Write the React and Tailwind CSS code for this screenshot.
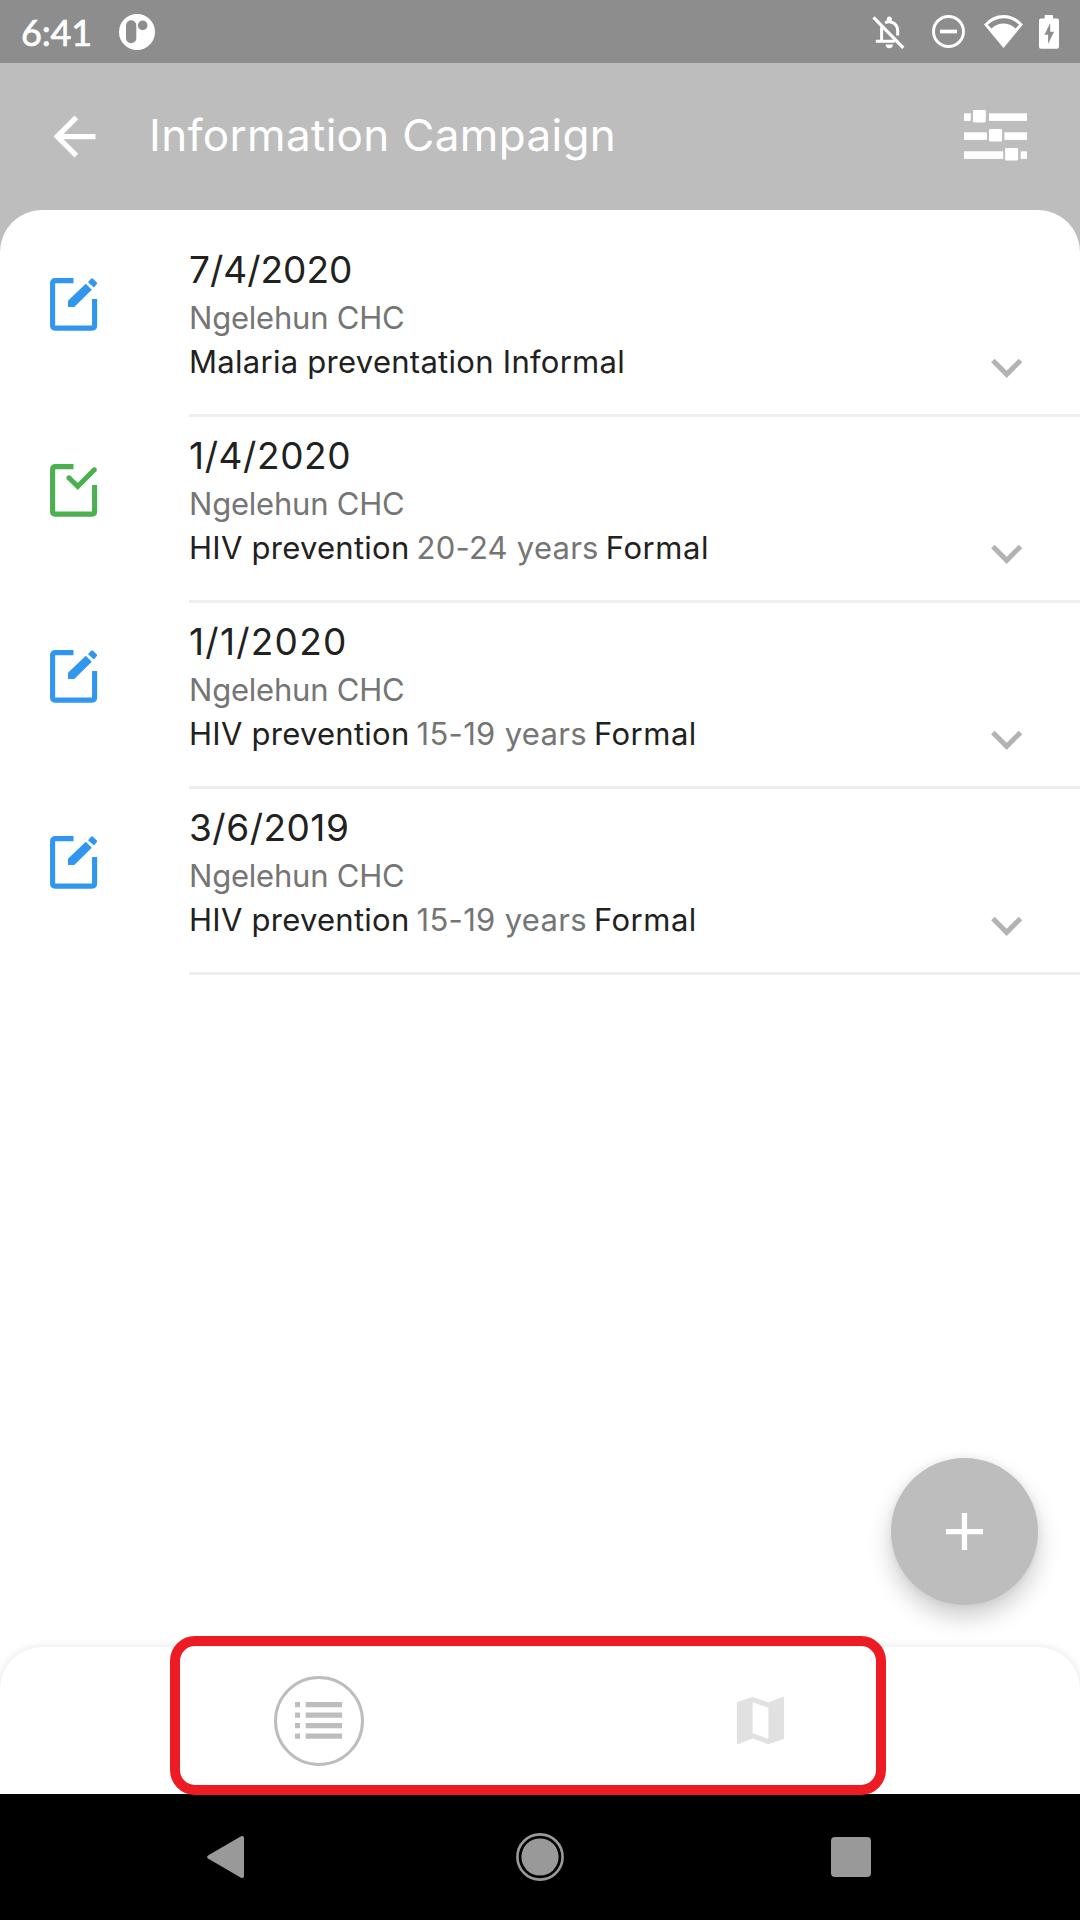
const events = [
  { date: "7/4/2020", tracking: "tracking-[0px]", status: "open", values: [{ text: "Malaria preventation Informal", style: "text-[#212121] tracking-[0.28px]" }] },
  {
    date: "1/4/2020",
    tracking: "tracking-[0.6px]",
    status: "completed",
    values: [
      { text: "HIV prevention", style: "text-[#212121] tracking-[0.26px]" },
      { text: "20-24 years", style: "text-[#757575] tracking-[0.25px]" },
      { text: "Formal", style: "text-[#212121] tracking-[0.6px]" },
    ],
  },
  {
    date: "1/1/2020",
    tracking: "tracking-[1.25px]",
    status: "open",
    values: [
      { text: "HIV prevention", style: "text-[#212121] tracking-[0.26px]" },
      { text: "15-19 years", style: "text-[#757575] tracking-[0.32px]" },
      { text: "Formal", style: "text-[#212121] tracking-[0.5px]" },
    ],
  },
  {
    date: "3/6/2019",
    tracking: "tracking-[0.5px]",
    status: "open",
    values: [
      { text: "HIV prevention", style: "text-[#212121] tracking-[0.26px]" },
      { text: "15-19 years", style: "text-[#757575] tracking-[0.32px]" },
      { text: "Formal", style: "text-[#212121] tracking-[0.5px]" },
    ],
  },
];

function EventIcon({ status }) {
  const done = status === "completed";
  return (
    <svg width="48" height="53" viewBox="0 0 48 53" fill="none" className={done ? "text-[#4caf50]" : "text-[#3196ee]"}>
      <path d="M23.5 2.6H5.1Q2.6 2.6 2.6 5.1V47.6Q2.6 50.1 5.1 50.1H42.1Q44.6 50.1 44.6 47.6V21" stroke="currentColor" strokeWidth="5.1" />
      {done ? (
        <>
          <path d="M18.9 13.8L27.7 22.4L44.3 5.8" stroke="currentColor" strokeWidth="5" />
          <circle cx="18.9" cy="13.8" r="2.5" fill="currentColor" />
          <circle cx="44.3" cy="5.8" r="2.5" fill="currentColor" />
        </>
      ) : (
        <path d="M18 22.7V29H24.3L41.8 11.7L35.8 5.8ZM38 4.2L41 .7Q42 -.4 43 .7L46.6 4.2Q47.6 5.3 46.6 6.3L43.9 9.6Z" fill="currentColor" />
      )}
    </svg>
  );
}

function StatusBar() {
  return (
    <div className="flex h-[63px] shrink-0 items-center bg-[#8d8d8d] pl-[21px] pr-[21px] text-white">
      <span className="w-[98px] pt-[2px] font-['Lato',sans-serif] text-[36px] leading-[63px] tracking-[-0.2px] [-webkit-text-stroke:0.7px_white]">6:41</span>
      <svg width="36" height="36" viewBox="0 0 36 36">
        <circle cx="18" cy="18" r="18" fill="white" />
        <rect x="7" y="6.3" width="10.3" height="23" rx="5.1" fill="#8d8d8d" />
        <circle cx="23.7" cy="11.4" r="4.8" fill="#8d8d8d" />
      </svg>
      <svg className="ml-auto" width="33" height="34" viewBox="0 0 33 34" fill="none" stroke="white">
        <path d="M1.5 2.3L31.3 32.9" strokeWidth="3.2" />
        <path d="M9.6 12V26.3M3.8 26.3H22.8" strokeWidth="3" />
        <path d="M13 7.9Q17 6 20.6 7.6Q25.7 9.8 25.7 16V20.5" strokeWidth="3" />
        <path d="M14.8 6V4A2.5 2.5 0 0 1 19.8 4V7H14.8ZM13.7 29.6H20.9A3.6 3.6 0 0 1 13.7 29.6Z" fill="white" stroke="none" />
      </svg>
      <svg className="ml-[27px]" width="33" height="33" viewBox="0 0 33 33" fill="none" stroke="white">
        <circle cx="16.5" cy="16.5" r="15" strokeWidth="2.9" />
        <path d="M8 16.5H25" strokeWidth="3.7" />
      </svg>
      <svg className="ml-[19px]" width="39" height="33" viewBox="0 0 39 33">
        <path fill="white" fillRule="evenodd" d="M19.5 33L0 9.4Q8.5 0 19.5 0T39 9.4ZM3.8 9.7L7.4 13.5Q13 8.4 19.5 8.4T31.6 13.5L35.2 9.7Q28 3.2 19.5 3.2T3.8 9.7Z" />
      </svg>
      <svg className="ml-[16px]" width="20" height="34" viewBox="0 0 20 34">
        <path d="M5.7 3.4V0H14V3.4H18Q20 3.4 20 5.4V31.7Q20 33.7 18 33.7H2Q0 33.7 0 31.7V5.4Q0 3.4 2 3.4Z" fill="white" />
        <path d="M11.2 8L5.5 19.8H9.1V29L15 16.7H11.2Z" fill="#8d8d8d" />
      </svg>
    </div>
  );
}

function FilterIcon() {
  return (
    <svg className="mb-[2px]" width="63" height="51" viewBox="0 0 63 51" fill="white">
      <rect x="0" y="3.3" width="6.8" height="7.6" />
      <rect x="9" y="0" width="12.8" height="12.5" rx="1.2" />
      <rect x="25" y="3.3" width="38" height="7.6" />
      <rect x="0" y="22.3" width="22.9" height="7.6" />
      <rect x="25" y="19" width="13" height="12.5" rx="1.2" />
      <rect x="40.4" y="22.3" width="22.6" height="7.6" />
      <rect x="0" y="41.3" width="39.2" height="7.6" />
      <rect x="41.1" y="38" width="13" height="12.5" rx="1.2" />
      <rect x="56.7" y="41.3" width="6.3" height="7.6" />
    </svg>
  );
}

function EventRow({ event }) {
  return (
    <li className="flex h-[186px]">
      <div className="w-[189px] shrink-0 pl-[50px] pt-[47px]">
        <EventIcon status={event.status} />
      </div>
      <div className="flex flex-1 items-end border-b-[3px] border-[#eeeeee] pr-[57px]">
        <div className="flex-1 self-start pt-[16px]">
          <div className={`text-[37px] leading-[45px] text-[#212121] ${event.tracking}`}>{event.date}</div>
          <div className="mt-1 text-[31px] leading-[44px] tracking-[-0.22px] text-[#757575]">Ngelehun CHC</div>
          <div className="flex gap-[7px] whitespace-nowrap text-[31px] leading-[44px]">
            {event.values.map((v) => (
              <span key={v.text} className={v.style}>{v.text}</span>
            ))}
          </div>
        </div>
        <svg className="mb-[36px]" width="32" height="20" viewBox="0 0 32 20" fill="none">
          <path d="M1.9 2.5L15.7 16.3L29.5 2.5" stroke="#b3b3b3" strokeWidth="5.1" />
        </svg>
      </div>
    </li>
  );
}

export default function App() {
  return (
    <div className="relative flex h-[1920px] w-[1080px] flex-col overflow-hidden bg-[#bdbdbd] font-['Inter',sans-serif]">
      <StatusBar />
      <header className="flex h-[147px] shrink-0 items-center pl-[43px] pr-[53px]">
        <svg className="mb-px" width="63" height="63" viewBox="0 0 24 24" fill="white">
          <path d="M20 11H7.83l5.59-5.59L12 4l-8 8 8 8 1.41-1.41L7.83 13H20v-2z" />
        </svg>
        <h1 className="ml-[43px] flex-1 pb-[3px] text-[44px] leading-[54px] tracking-[0.32px] text-white">Information Campaign</h1>
        <FilterIcon />
      </header>

      <main className="relative flex min-h-0 flex-1 flex-col overflow-hidden rounded-t-[42px] bg-white">
        <ul className="flex-1 pt-[21px]">
          {events.map((e) => (
            <EventRow key={e.date} event={e} />
          ))}
        </ul>

        <nav className="flex h-[147px] shrink-0 items-center rounded-t-[42px] bg-white pl-[274px] shadow-[0_0_10px_rgba(0,0,0,0.11)]">
          <div className="flex size-[90px] items-center justify-center rounded-full border-[3px] border-[#bdbdbd] pr-px">
            <svg width="48" height="38" viewBox="0 0 48 38" fill="#bdbdbd">
              <path d="M0 0h5v5.2H0zM10.7 0h36.4v5.2H10.7zM0 10.6h5v5.2H0zM10.7 10.6h36.4v5.2H10.7zM0 21h5v5.2H0zM10.7 21h36.4v5.2H10.7zM0 31.6h5v5.2H0zM10.7 31.6h36.4v5.2H10.7z" />
            </svg>
          </div>
          <svg className="ml-[365px]" width="63" height="63" viewBox="0 0 24 24" fill="#e1e1e1">
            <path d="M20.5 3l-.16.03L15 5.1 9 3 3.36 4.9c-.21.07-.36.25-.36.48V20.5c0 .28.22.5.5.5l.16-.03L9 18.9l6 2.1 5.64-1.9c.21-.07.36-.25.36-.48V3.5c0-.28-.22-.5-.5-.5zM15 19l-6-2.11V5l6 2.11V19z" />
          </svg>
        </nav>

        <button className="absolute bottom-[189px] right-[42px] flex size-[147px] items-center justify-center rounded-full bg-[#bdbdbd] shadow-[0_12px_24px_rgba(0,0,0,0.2),0_0_8px_rgba(0,0,0,0.06)]">
          <svg width="37" height="37" viewBox="0 0 37 37">
            <path d="M0 18.7H37M18.5 0V37" stroke="white" strokeWidth="5.3" />
          </svg>
        </button>
      </main>

      <footer className="flex h-[126px] shrink-0 items-center bg-black pl-[207px]">
        <svg width="37" height="42" viewBox="0 0 37 42" fill="#999999">
          <path d="M34 .3Q37 -.6 37 2V40Q37 42.6 34 41.7L1 22.5Q-.8 21 1 19.5Z" />
        </svg>
        <svg className="ml-[272px]" width="48" height="48" viewBox="0 0 48 48">
          <circle cx="24" cy="24" r="22.6" fill="none" stroke="#999999" strokeWidth="2.6" />
          <circle cx="24" cy="24" r="18.6" fill="#999999" />
        </svg>
        <div className="ml-[267px] size-[40px] rounded-[4px] bg-[#999999]" />
      </footer>

      <div className="pointer-events-none absolute left-[170px] top-[1636px] h-[159px] w-[716px] rounded-[25px] border-[10px] border-[#ed1c24]" />
    </div>
  );
}
